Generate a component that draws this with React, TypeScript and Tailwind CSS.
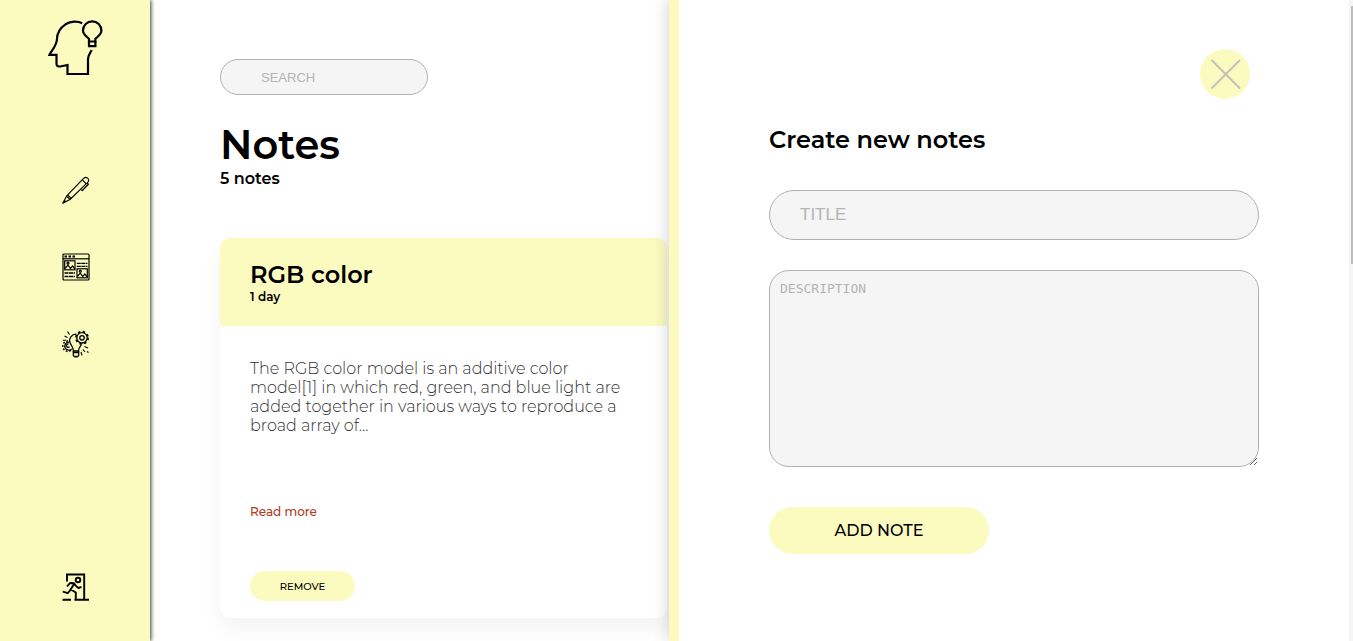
import React from "react";

type IconProps = { className?: string };

function LogoIcon({ className }: IconProps) {
  return (
    <svg viewBox="0 0 56 56" className={className} fill="none" stroke="currentColor" strokeWidth="2.2" aria-hidden="true">
      <path d="M34.200 3.200C30 1.200 23 .8 17.500 4.300C12 8 9 13 9 19C9 25 4 30 1.500 34.800H8.500V43.500Q8.500 46.800 12 46.500L19.500 45V54H40V40C40 36 41.500 33.500 43.800 30.200" />
      <path d="M41 21.500V18.800C38.500 16.500 35 14.500 35 10.500A9.200 9.200 0 0 1 53.400 10.500C53.400 14.500 49.900 16.500 47.400 18.800V21.500Z" />
      <path d="M41 21.500V26.200H47.400V21.500" />
    </svg>
  );
}

function PenIcon({ className }: IconProps) {
  return (
    <svg viewBox="0 0 28 28" className={className} fill="none" stroke="currentColor" strokeWidth="1.100" strokeLinejoin="round" aria-hidden="true">
      <path d="M.8 27.200L4.500 20.200L21.800 2.200Q23.800 .6 25.800 2.300Q27.500 4.300 25.900 6.200L8 23.500Z" />
      <path d="M4.500 20.200L8 23.500M5.600 19L9.200 22.400M20.300 3.800L24.200 7.800M.8 27.200L3.500 24.500" />
      <path d="M25.300 7.200L26.300 8.200L20.300 14.600L19.300 13.600" strokeWidth="1.300" />
    </svg>
  );
}

function BoardIcon({ className }: IconProps) {
  return (
    <svg viewBox="0 0 28 28" className={className} fill="none" stroke="currentColor" strokeWidth="1.200" aria-hidden="true">
      <rect x="1" y="1" width="26" height="26" rx="1" />
      <path d="M1 5.800H27" />
      <path d="M2.500 3.400H5M6.500 3.400H9M10.500 3.400H13" strokeWidth="2" />
      <rect x="2.700" y="7.800" width="10.300" height="9" />
      <rect x="15" y="15.800" width="10.300" height="9" />
      <path d="M3 15.500L6 12.200L8.500 15.500L10.500 13L13 16M15.300 23.500L18.300 20.200L20.800 23.500L22.800 21L25.300 24" />
      <circle cx="6" cy="10.200" r="1" />
      <circle cx="18.300" cy="18.200" r="1" />
      <path d="M14.800 10.300H25.500M14.800 13.300H25.500M2.500 20H13M2.500 23.500H13" strokeWidth="1.300" strokeDasharray="4 .5" />
    </svg>
  );
}

function IdeaIcon({ className }: IconProps) {
  return (
    <svg viewBox="0 0 28 28" className={className} fill="none" stroke="currentColor" strokeWidth="1.300" aria-hidden="true">
      <path d="M14.500 4.200C9.500 4 6.500 8.500 8 12.500C9 15.500 11.300 17 11.500 21H16.500C16.500 18 18.500 16 19.500 14.500" />
      <path d="M11.300 22.500H16.700M12.300 26.600H15.700" strokeWidth="1.600" />
      <path d="M11.300 21V25.500L12.300 26.600M16.700 21V25.500L15.700 26.600" />
      <circle cx="20" cy="7.800" r="5.200" />
      <circle cx="20" cy="7.800" r="2.200" />
      <circle cx="20" cy="7.800" r="6.200" strokeWidth="1.600" strokeDasharray="2.400 2.470" />
      <path d="M7 12.200A4 4 0 1 0 9.800 18.800M6.500 14A1.700 1.700 0 1 0 7.500 16.800" />
      <path d="M6 11A5.200 5.200 0 1 0 9.500 20" strokeWidth="1.500" strokeDasharray="1.800 1.700" />
      <path d="M2.500 6L5.500 7.500M5.500 1.500L7.500 4.500M.8 10.300L4 10.300M22.500 16.500L26 18M21 19.500L23 22M19 22L20 25.500M25 21.500L26.500 22.500" strokeWidth="1.100" />
    </svg>
  );
}

function ExitIcon({ className }: IconProps) {
  return (
    <svg viewBox="0 0 28 28" className={className} fill="none" stroke="currentColor" strokeWidth="1.900" aria-hidden="true">
      <path d="M5 8.500V1.500H22.200V26.200" />
      <path d="M12.500 26.700H27M.5 26.700H9" />
      <circle cx="16" cy="7" r="2.300" />
      <path d="M5 13.500L8 10L12 10.200L14.500 13.500L16.500 15L19.500 13.800M11.800 11.500L8 17.500L5.800 20.200L.8 18.600M9 16.500L13.800 19.500V26.500" strokeLinejoin="round" />
    </svg>
  );
}

function Sidebar() {
  return (
    <aside className="z-10 flex flex-col items-center bg-[#fbfbc0] pt-5 pb-10 pl-[2px] shadow-[1px_0_4px_rgba(0,0,0,0.8)]">
      <a href="#home" aria-label="Home">
        <LogoIcon className="size-14" />
      </a>
      <nav className="mt-[100px] flex flex-col gap-[49px]">
        <a href="#write" aria-label="Write"><PenIcon className="size-7" /></a>
        <a href="#articles" aria-label="Articles"><BoardIcon className="size-7" /></a>
        <a href="#ideas" aria-label="Ideas"><IdeaIcon className="size-7" /></a>
      </nav>
      <button type="button" aria-label="Log out" className="mt-auto">
        <ExitIcon className="size-7" />
      </button>
    </aside>
  );
}

function NoteCard() {
  return (
    <article className="mt-[50px] rounded-[10px] bg-white pb-[17px] shadow-[0_10px_20px_rgba(0,0,0,0.05)]">
      <header className="rounded-t-[10px] rounded-b-[4px] bg-[#fbfbc0] px-[30px] pt-[22px] pb-[22px]">
        <h2 className="text-2xl leading-[29px] font-semibold">RGB color</h2>
        <p className="text-xs leading-[15px] font-semibold">1 day</p>
      </header>
      <div className="flex flex-col items-start px-[30px] pt-[33px]">
        <p className="max-w-[380px] text-base leading-[19px] font-light text-[#333]">
          The RGB color model is an additive color model[1] in which red, green, and blue light are added
          together in various ways to reproduce a broad array of...
        </p>
        <a href="#note" className="mt-[69px] text-xs leading-4 font-medium text-[#b23a1c]">Read more</a>
        <button type="button" className="mt-[51px] h-[30px] w-[105px] rounded-full bg-[#fbfbc0] text-[10px] font-medium">
          REMOVE
        </button>
      </div>
    </article>
  );
}

function NewNotePanel() {
  return (
    <section className="z-10 flex flex-col border-l-[10px] border-[#fbfbc0] bg-white px-[90px] pt-[49px] shadow-[0_0_16px_rgba(0,0,40,0.2)]">
      <div className="flex justify-end pr-[9px]">
        <button type="button" aria-label="Close" className="flex size-[50px] items-center justify-center rounded-full bg-[#fbfbc0]">
          <svg viewBox="0 0 32 32" className="size-8" fill="none" stroke="#c2c2b8" strokeWidth="2" aria-hidden="true">
            <path d="M2.500 2L31 30.500M31 2L2.500 30.500" />
          </svg>
        </button>
      </div>
      <form className="mt-[26px] flex flex-col items-start">
        <h2 className="text-2xl leading-[29px] font-semibold">Create new notes</h2>
        <input
          aria-label="Title"
          placeholder="TITLE"
          className="mt-9 h-[50px] w-full rounded-full border border-[#b0b0b0] bg-[#f5f5f5] px-[30px] font-['Liberation_Sans',sans-serif] text-[17px] placeholder:text-[#b4b4b4]"
        />
        <textarea
          aria-label="Description"
          placeholder="DESCRIPTION"
          className="mt-[30px] h-[197px] w-full resize rounded-[20px] border border-[#b0b0b0] bg-[#f5f5f5] p-[10px] font-['DejaVu_Sans_Mono',monospace] text-[13px] leading-4 placeholder:text-[#b4b4b4]"
        />
        <button type="button" className="mt-10 h-[47px] w-[220px] rounded-full bg-[#fbfbc0] text-base font-medium">
          ADD NOTE
        </button>
      </form>
    </section>
  );
}

export default function App() {
  return (
    <div className="grid min-h-screen grid-cols-[150px_minmax(0,519fr)_minmax(0,680fr)_4px] bg-white font-['Montserrat','Inter',sans-serif] text-black">
      <Sidebar />
      <main className="min-w-0 pt-[59px] pr-[2px] pl-[70px]">
        <input
          type="search"
          aria-label="Search"
          placeholder="SEARCH"
          className="block h-9 w-[208px] rounded-full border border-[#b0b0b0] bg-[#f5f5f5] px-10 font-['Liberation_Sans',sans-serif] text-[13px] placeholder:text-[#b4b4b4]"
        />
        <h1 className="mt-[25px] text-[40px] leading-[49px] font-semibold">Notes</h1>
        <p className="text-base leading-[19px] font-semibold">5 notes</p>
        <NoteCard />
      </main>
      <NewNotePanel />
      <div className="z-10 bg-[#f5f5f5] pt-[6px] pl-[2px]" aria-hidden="true">
        <div className="h-[258px] bg-[#bdbdbd]" />
      </div>
    </div>
  );
}
